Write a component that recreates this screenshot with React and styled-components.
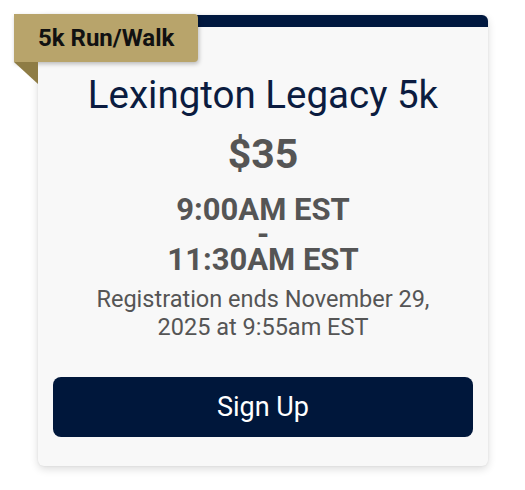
import React from 'react';
import styled, { createGlobalStyle } from 'styled-components';

const GlobalStyle = createGlobalStyle`
  body {
    margin: 0;
    background: #ffffff;
    font-family: Roboto, "Liberation Sans", sans-serif;
  }
`

const Page = styled.div`
  padding: 15px 37px 24px 38px;
`

const Card = styled.div`
  position: relative;
  width: 450px;
  box-sizing: border-box;
  background: #f8f8f8;
  border-top: 12px solid #00183f;
  border-radius: 6px;
  box-shadow: 0 3px 8px rgba(0,0,0,0.14), 0 0 2px rgba(0,0,0,0.08);
  padding: 46px 15px 29px;
  display: flex;
  flex-direction: column;
  align-items: center;
  text-align: center;
`

const Ribbon = styled.div`
  position: absolute;
  top: -13px;
  left: -24px;
  height: 48px;
  padding: 0 24px;
  display: flex;
  align-items: center;
  background: #b8a46b;
  border-radius: 0 4px 4px 0;
  box-shadow: 1px 2px 4px rgba(0,0,0,0.25);
  font-size: 24px;
  font-weight: 700;
  color: #111;
  &::after {
    content: '';
    position: absolute;
    left: 0;
    top: 48px;
    border-top: 22px solid #8e7c45;
    border-left: 24px solid transparent;
  }
`

const Title = styled.h2`
  margin: 0;
  font-size: 38.5px;
  font-weight: 400;
  color: #0b1c40;
  line-height: 44px;
`

const Price = styled.div`
  margin-top: 13px;
  font-size: 41px;
  font-weight: 700;
  color: #555555;
  line-height: 48px;
`

const Times = styled.div`
  margin-top: 19px;
  font-size: 31px;
  font-weight: 700;
  color: #555555;
  line-height: 25px;
`

const Registration = styled.div`
  margin-top: 13px;
  font-size: 23.5px;
  color: #555555;
  line-height: 28px;
  padding: 0 30px;
`

const SignUp = styled.button`
  margin-top: 36px;
  width: 100%;
  height: 60px;
  border: none;
  border-radius: 8px;
  background: #00173b;
  color: #ffffff;
  font-family: Roboto, "Liberation Sans", sans-serif;
  font-size: 27px;
  cursor: pointer;
`

const App = () => {
  return (
    <Page>
      <GlobalStyle />
      <Card>
        <Ribbon>5k Run/Walk</Ribbon>
        <Title>Lexington Legacy 5k</Title>
        <Price>$35</Price>
        <Times>
          9:00AM EST<br />-<br />11:30AM EST
        </Times>
        <Registration>Registration ends November 29, 2025 at 9:55am EST</Registration>
        <SignUp>Sign Up</SignUp>
      </Card>
    </Page>
  );
}

export default App;
